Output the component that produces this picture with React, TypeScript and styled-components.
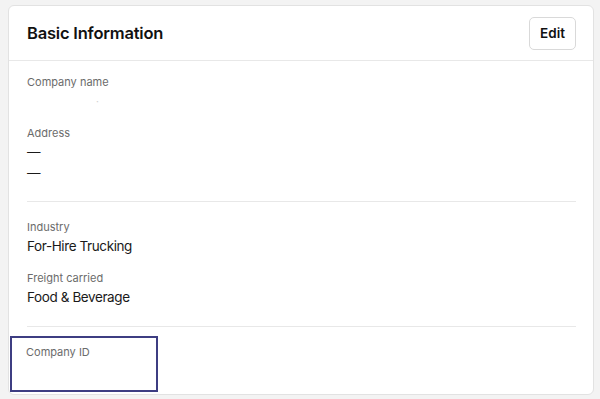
import styled, { createGlobalStyle } from "styled-components";

const GlobalStyle = createGlobalStyle`
    html, body {
        margin: 0;
        padding: 0;
        background: #f3f3f3;
        font-family: Inter, "Noto Sans", sans-serif;
        color: #1a1a1a;
    }
`;

interface FieldProps {
    label: string;
    values?: string[];
    highlighted?: boolean;
}

const Field = ({ label, values = [], highlighted }: FieldProps) => (
    <StyledField $highlighted={highlighted}>
        <Label>{label}</Label>
        {values.map((v, i) => <Value key={i}>{v}</Value>)}
    </StyledField>
);

const StyledField = styled.div<{ $highlighted?: boolean }>`
    display: flex;
    flex-direction: column;
    gap: 2px;
    ${({ $highlighted }) => $highlighted && `
        margin: 0 0 0 -17px;
        width: 116px;
        height: 40px;
        padding: 6px 14px 6px 14px;
        border: 2px solid #3d3d82;
    `}
`;

const Card = styled.div`
    margin: 5px 6px 4px 8px;
    height: 388px;
    background: #fff;
    border: 1px solid #e2e2e2;
    border-radius: 6px;
    display: flex;
    flex-direction: column;
    overflow: hidden;
`;

const Header = styled.div`
    height: 54px;
    flex-shrink: 0;
    display: flex;
    align-items: center;
    justify-content: space-between;
    padding: 0 17px 0 18px;
    border-bottom: 1px solid #e8e8e8;
`;

const Title = styled.h2`
    margin: 0;
    font-size: 16.5px;
    font-weight: 600;
    letter-spacing: -0.2px;
    color: #111;
`;

const EditButton = styled.button`
    width: 47px;
    height: 33px;
    padding: 0;
    background: #fff;
    border: 1px solid #d9d9d9;
    border-radius: 5px;
    font-family: inherit;
    font-size: 13.5px;
    font-weight: 600;
    color: #111;
    cursor: pointer;
`;

const Body = styled.div`
    padding: 0 17px 0 18px;
    display: flex;
    flex-direction: column;
`;

const Section = styled.div<{ $padding: string; $divider?: boolean }>`
    display: flex;
    flex-direction: column;
    gap: 14px;
    padding: ${({ $padding }) => $padding};
    border-bottom: ${({ $divider }) => ($divider ? "1px solid #e8e8e8" : "none")};
`;

const Label = styled.div`
    font-size: 11px;
    line-height: 16px;
    color: #6b6b6b;
`;

const Value = styled.div`
    font-size: 13.5px;
    line-height: 19px;
    letter-spacing: -0.4px;
    color: #1a1a1a;
`;

const BlankDot = styled.div`
    height: 19px;
    padding-left: 69px;
    font-size: 10px;
    line-height: 19px;
    color: #cfcfcf;
`;

export default function App() {
    return <>
        <GlobalStyle />
        <Card>
            <Header>
                <Title>Basic Information</Title>
                <EditButton>Edit</EditButton>
            </Header>
            <Body>
                <Section $padding="13px 0 18px" $divider>
                    <StyledField>
                        <Label>Company name</Label>
                        <BlankDot>·</BlankDot>
                    </StyledField>
                    <Field label="Address" values={["—", "—"]} />
                </Section>
                <Section $padding="17px 0 19px" $divider>
                    <Field label="Industry" values={["For-Hire Trucking"]} />
                    <Field label="Freight carried" values={["Food & Beverage"]} />
                </Section>
                <Section $padding="9px 0 0">
                    <Field label="Company ID" highlighted />
                </Section>
            </Body>
        </Card>
    </>;
}
